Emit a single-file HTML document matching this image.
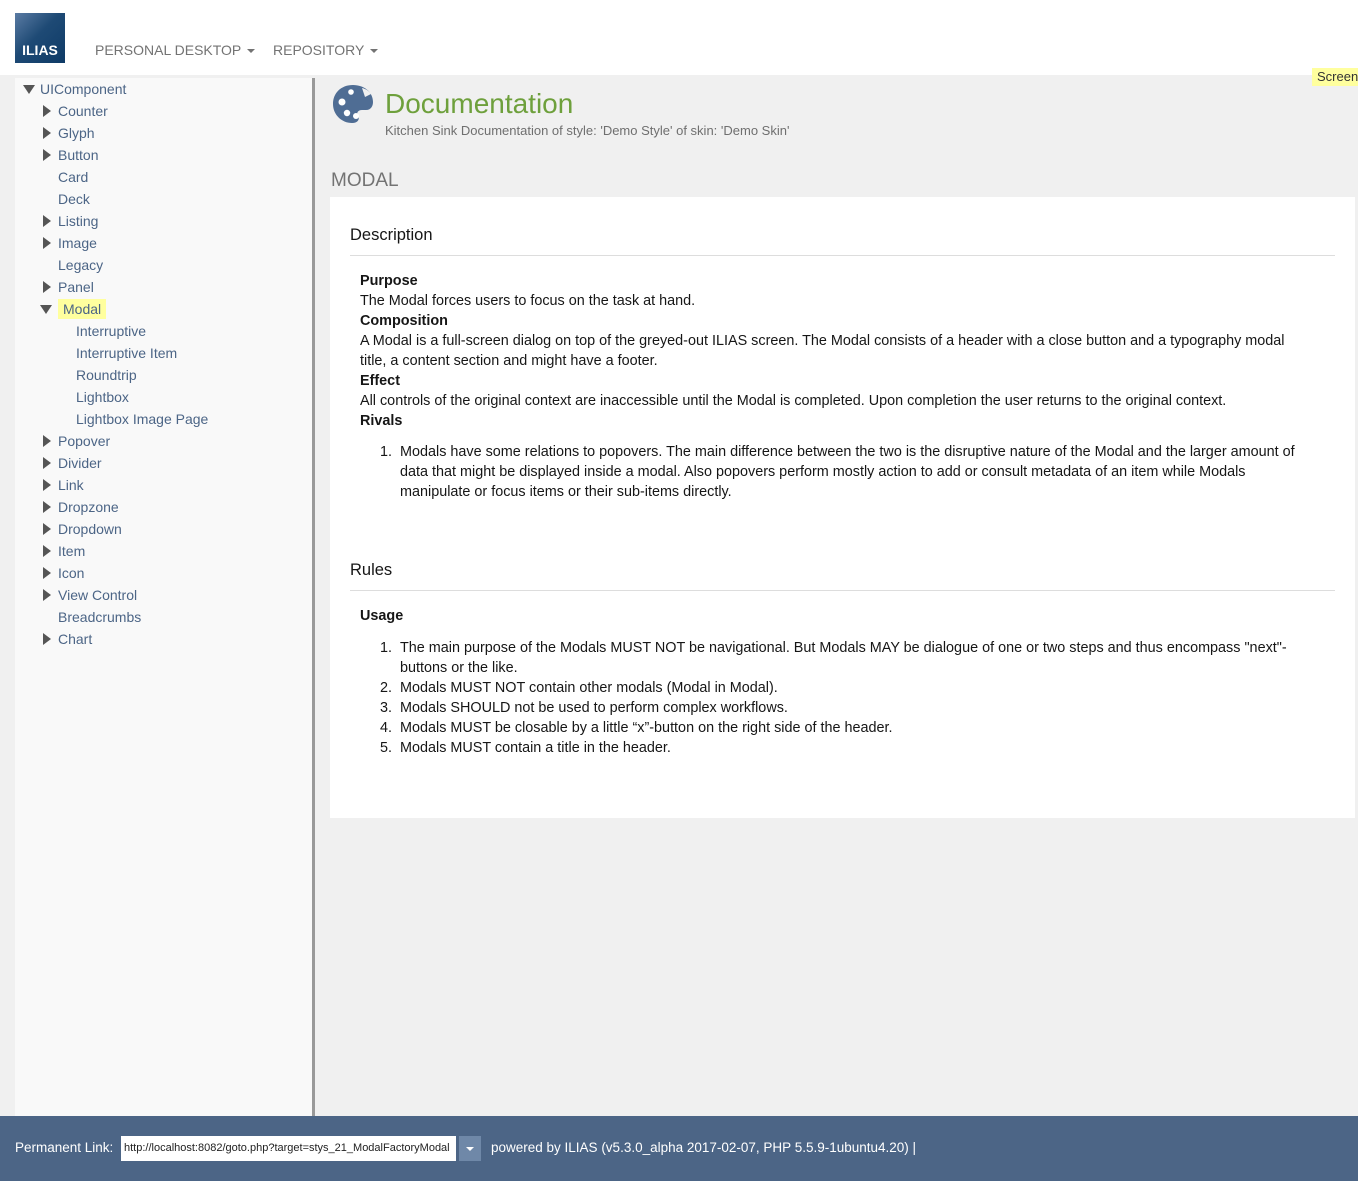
<!DOCTYPE html>
<html><head><meta charset="utf-8"><style>
*{margin:0;padding:0;box-sizing:border-box}
body{width:1358px;height:1181px;position:relative;background:#f0f0f0;font-family:"Liberation Sans",sans-serif;font-size:14px;color:#161616;overflow:hidden}
.hdr{position:absolute;left:0;top:0;width:1358px;height:75px;background:#fff}
.logo{position:absolute;left:15px;top:13px;width:50px;height:50px;background:linear-gradient(135deg,#5a7ba3 0%,#1e4a75 45%,#0e3a66 100%)}
.logo span{position:absolute;left:0;right:0;bottom:5px;text-align:center;color:#fff;font-weight:bold;font-size:14px}
.nav{position:absolute;top:42px;color:#737373;font-size:14px}
.caret{display:inline-block;width:0;height:0;border-left:4px solid transparent;border-right:4px solid transparent;border-top:4px solid #737373;vertical-align:middle;margin-left:6px}
.side{position:absolute;left:15px;top:78px;width:297px;height:1038px;background:#f9f9f9}
.sbar{position:absolute;left:312px;top:78px;width:3px;height:1038px;background:#999}
.t{position:absolute;height:22px;line-height:22px;color:#4c6586;font-size:14px;white-space:nowrap}
.ar{position:absolute;width:0;height:0;border-top:6px solid transparent;border-bottom:6px solid transparent;border-left:8px solid #555}
.ad{position:absolute;width:0;height:0;border-left:6px solid transparent;border-right:6px solid transparent;border-top:9px solid #555}
.shot{position:absolute;left:1312px;top:68px;width:46px;height:18px;background:#ffff9e;color:#333;font-size:13px;line-height:18px;padding-left:5px}
h1{position:absolute;left:385px;top:88px;font-weight:normal;color:#6ea03c;font-size:28px}
.sub{position:absolute;left:385px;top:123px;color:#6f6f6f;font-size:13px}
.mod{position:absolute;left:331px;top:170px;color:#737373;font-size:19px}
.panel{position:absolute;left:330px;top:197px;width:1025px;height:621px;background:#fff}
.p{position:absolute;white-space:nowrap;font-size:14.4px;line-height:20px;color:#161616}
.h2{position:absolute;left:350px;font-size:16.5px;color:#161616}
.hr{position:absolute;left:350px;width:985px;height:1px;background:#ddd}
b{font-weight:bold}
.foot{position:absolute;left:0;top:1116px;width:1358px;height:65px;background:#4c6586;color:#fff;font-size:13.5px}
.inp{position:absolute;left:121px;top:20px;width:335px;height:25px;background:#fff;color:#222;font-size:11px;line-height:25px;padding-left:3px;overflow:hidden;white-space:nowrap}
.btn{position:absolute;left:459px;top:20px;width:22px;height:25px;background:#6f88a8}
.btn i{position:absolute;left:7px;top:11px;border-left:4px solid transparent;border-right:4px solid transparent;border-top:4px solid #fff}
</style></head><body>
<div class="hdr">
<div class="logo"><span>ILIAS</span></div>
<div class="nav" style="left:95px">PERSONAL DESKTOP<span class="caret"></span></div>
<div class="nav" style="left:273px">REPOSITORY<span class="caret"></span></div>
</div>
<div class="side"></div><div class="sbar"></div>

<div class="ad" style="left:23px;top:85px"></div><div class="t" style="left:40px;top:78px">UIComponent</div>
<div class="ar" style="left:43px;top:105px"></div><div class="t" style="left:58px;top:100px">Counter</div>
<div class="ar" style="left:43px;top:127px"></div><div class="t" style="left:58px;top:122px">Glyph</div>
<div class="ar" style="left:43px;top:149px"></div><div class="t" style="left:58px;top:144px">Button</div>
<div class="t" style="left:58px;top:166px">Card</div>
<div class="t" style="left:58px;top:188px">Deck</div>
<div class="ar" style="left:43px;top:215px"></div><div class="t" style="left:58px;top:210px">Listing</div>
<div class="ar" style="left:43px;top:237px"></div><div class="t" style="left:58px;top:232px">Image</div>
<div class="t" style="left:58px;top:254px">Legacy</div>
<div class="ar" style="left:43px;top:281px"></div><div class="t" style="left:58px;top:276px">Panel</div>
<div class="ad" style="left:40px;top:305px"></div><div class="t" style="left:58px;top:299px;height:20px;line-height:20px;background:#ffff9e;padding:0 5px">Modal</div>
<div class="t" style="left:76px;top:320px">Interruptive</div>
<div class="t" style="left:76px;top:342px">Interruptive Item</div>
<div class="t" style="left:76px;top:364px">Roundtrip</div>
<div class="t" style="left:76px;top:386px">Lightbox</div>
<div class="t" style="left:76px;top:408px">Lightbox Image Page</div>
<div class="ar" style="left:43px;top:435px"></div><div class="t" style="left:58px;top:430px">Popover</div>
<div class="ar" style="left:43px;top:457px"></div><div class="t" style="left:58px;top:452px">Divider</div>
<div class="ar" style="left:43px;top:479px"></div><div class="t" style="left:58px;top:474px">Link</div>
<div class="ar" style="left:43px;top:501px"></div><div class="t" style="left:58px;top:496px">Dropzone</div>
<div class="ar" style="left:43px;top:523px"></div><div class="t" style="left:58px;top:518px">Dropdown</div>
<div class="ar" style="left:43px;top:545px"></div><div class="t" style="left:58px;top:540px">Item</div>
<div class="ar" style="left:43px;top:567px"></div><div class="t" style="left:58px;top:562px">Icon</div>
<div class="ar" style="left:43px;top:589px"></div><div class="t" style="left:58px;top:584px">View Control</div>
<div class="t" style="left:58px;top:606px">Breadcrumbs</div>
<div class="ar" style="left:43px;top:633px"></div><div class="t" style="left:58px;top:628px">Chart</div>

<div class="shot">Screen</div>
<svg style="position:absolute;left:332px;top:83px" width="42" height="42" viewBox="0 0 42 42">
<path d="M21 2C9 2 1 10 1 21c0 11 9 19 19 19 6 0 8-4 6-7-2-3 0-6 4-6h4c5 0 7-4 7-8C41 9 32 2 21 2z" fill="#4f6d94"/>
<circle cx="10" cy="19" r="3.5" fill="#fff"/><circle cx="15" cy="30" r="3.2" fill="#fff"/><circle cx="24" cy="33" r="3" fill="#fff"/><circle cx="19" cy="9" r="2.8" fill="#fff"/>
<path d="M30 5c4 1 7 3 9 6l-6 3z" fill="#f0f0f0"/>
</svg>
<h1>Documentation</h1>
<div class="sub">Kitchen Sink Documentation of style: 'Demo Style' of skin: 'Demo Skin'</div>
<div class="mod">MODAL</div>
<div class="panel"></div>
<div class="h2" style="top:226px">Description</div>
<div class="hr" style="top:255px"></div>
<div class="p" style="left:360px;top:271px"><b>Purpose</b><br>The Modal forces users to focus on the task at hand.<br><b>Composition</b><br>A Modal is a full-screen dialog on top of the greyed-out ILIAS screen. The Modal consists of a header with a close button and a typography modal<br>title, a content section and might have a footer.<br><b>Effect</b><br>All controls of the original context are inaccessible until the Modal is completed. Upon completion the user returns to the original context.<br><b>Rivals</b></div>
<div class="p" style="left:380px;top:442px">1.</div>
<div class="p" style="left:400px;top:442px">Modals have some relations to popovers. The main difference between the two is the disruptive nature of the Modal and the larger amount of<br>data that might be displayed inside a modal. Also popovers perform mostly action to add or consult metadata of an item while Modals<br>manipulate or focus items or their sub-items directly.</div>
<div class="h2" style="top:561px">Rules</div>
<div class="hr" style="top:590px"></div>
<div class="p" style="left:360px;top:606px"><b>Usage</b></div>
<div class="p" style="left:380px;top:638px">1.<br><br>2.<br>3.<br>4.<br>5.</div>
<div class="p" style="left:400px;top:638px">The main purpose of the Modals MUST NOT be navigational. But Modals MAY be dialogue of one or two steps and thus encompass "next"-<br>buttons or the like.<br>Modals MUST NOT contain other modals (Modal in Modal).<br>Modals SHOULD not be used to perform complex workflows.<br>Modals MUST be closable by a little “x”-button on the right side of the header.<br>Modals MUST contain a title in the header.</div>

<div class="foot">
<div style="position:absolute;left:15px;top:24px">Permanent Link:</div>
<div class="inp">http://localhost:8082/goto.php?target=stys_21_ModalFactoryModal</div>
<div class="btn"><i></i></div>
<div style="position:absolute;left:491px;top:24px">powered by ILIAS (v5.3.0_alpha 2017-02-07, PHP 5.5.9-1ubuntu4.20) |</div>
</div>
</body></html>
